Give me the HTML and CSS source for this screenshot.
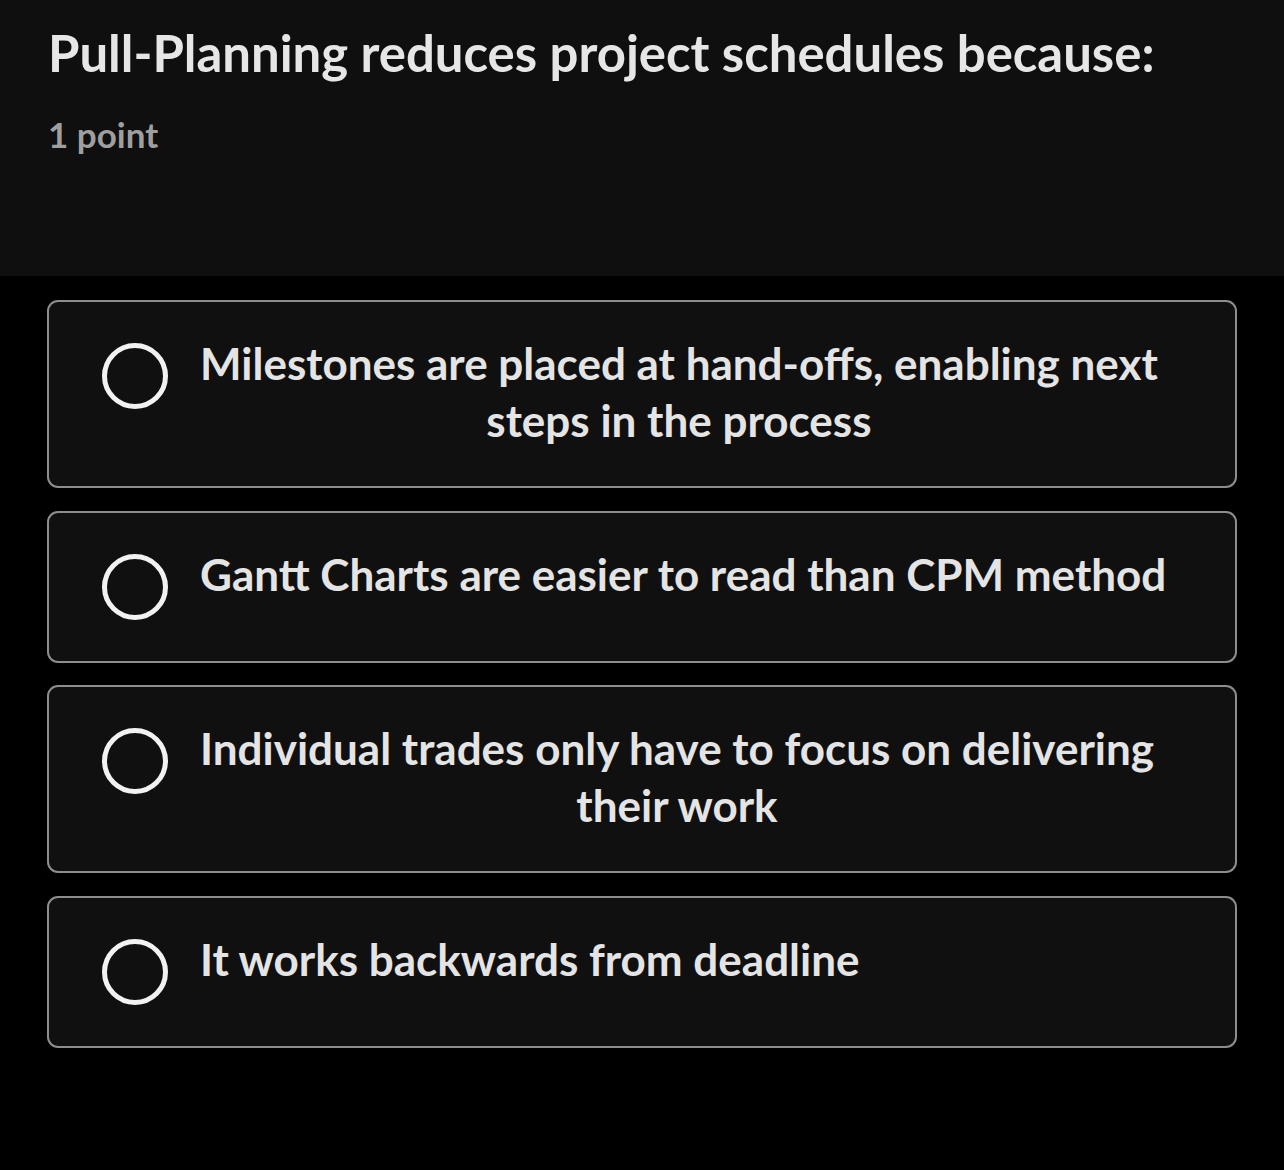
FILE: index.html
```html
<!DOCTYPE html>
<html lang="en">
<head>
<meta charset="utf-8">
<title>Quiz question</title>
<link rel="stylesheet" href="styles.css">
</head>
<body>
<header class="question">
  <h1 class="question-title">Pull-Planning reduces project schedules because:</h1>
  <p class="question-points">1 point</p>
</header>
<main class="options">
  <label class="option">
    <span class="radio"></span>
    <span class="option-text">Milestones are placed at hand-offs, enabling next<br>steps in the process</span>
  </label>
  <label class="option">
    <span class="radio"></span>
    <span class="option-text">Gantt Charts are easier to read than CPM method</span>
  </label>
  <label class="option">
    <span class="radio"></span>
    <span class="option-text">Individual trades only have to focus on delivering<br>their work</span>
  </label>
  <label class="option">
    <span class="radio"></span>
    <span class="option-text">It works backwards from deadline</span>
  </label>
</main>
</body>
</html>
```

FILE: styles.css
```css
html, body {
  margin: 0;
  padding: 0;
}

body {
  background: #000000;
  color: #e4e4e4;
  font-family: Lato, "Noto Sans", sans-serif;
  font-weight: 700;
}

.question {
  background: #0f0f0f;
  height: 276px;
  box-sizing: border-box;
  padding: 22px 47px 0 48px;
}

.question-title {
  margin: 0;
  font-size: 50.9px;
  line-height: 1.2;
  font-weight: 700;
  color: #e6e6e6;
}

.question-points {
  margin: 30px 0 0;
  font-size: 35px;
  line-height: 1.2;
  color: #9f9f9f;
}

.options {
  display: flex;
  flex-direction: column;
  gap: 22.5px;
  padding: 24px 47px 0;
}

.option {
  display: flex;
  align-items: flex-start;
  background: #101010;
  border: 2px solid #8d8d8d;
  border-radius: 11px;
  padding: 33px 30px 37px 53px;
}

.radio {
  flex: none;
  width: 66px;
  height: 66px;
  box-sizing: border-box;
  border: 5px solid #f2f2f2;
  border-radius: 50%;
  margin: 8px 0 4px;
}

.option-text {
  margin-left: 32px;
  font-size: 44px;
  line-height: 57px;
  text-align: center;
  color: #e4e4e4;
}
```
